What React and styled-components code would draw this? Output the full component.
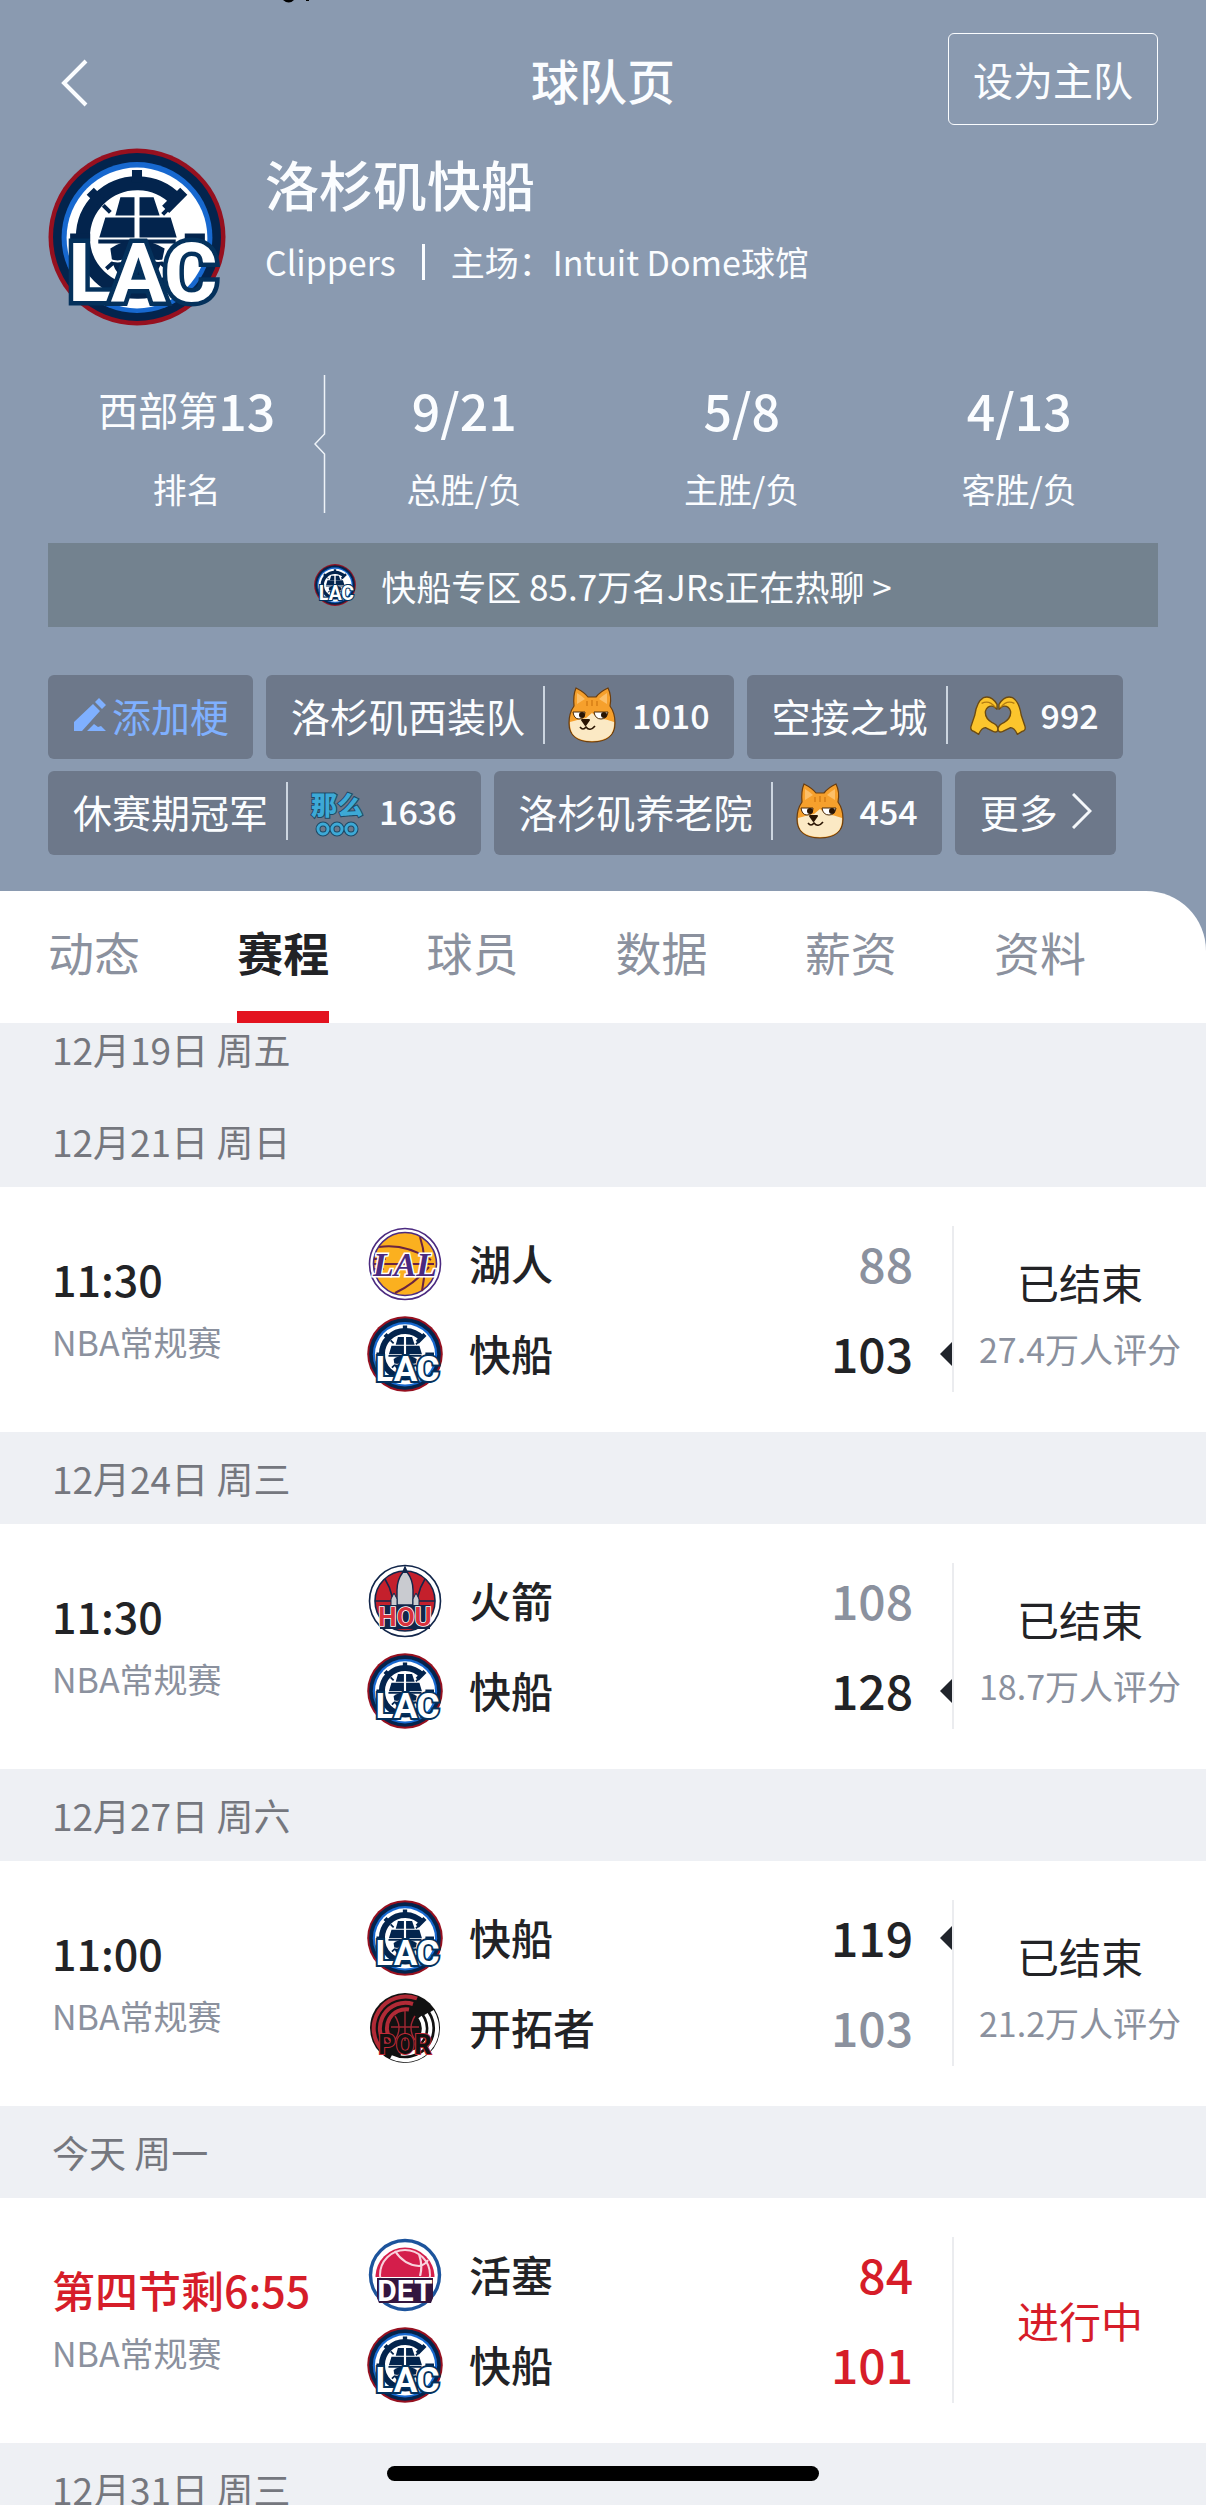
import React, { useState } from "react"

import { createGlobalStyle, styled } from "styled-components"

const GlobalStyle = createGlobalStyle`
    * {
        box-sizing: border-box;
    }

    body {
        margin: 0;

        font-family: "Noto Sans CJK SC", "Noto Sans", sans-serif;
        color: #222326;
    }

    button {
        border: none;

        background: none;

        padding: 0;

        font: inherit;
        color: inherit;

        cursor: pointer;
    }

    a {
        color: inherit;
        text-decoration: none;
    }

    h1, h2, h3, p {
        margin: 0;

        font-weight: 400;
    }

    svg {
        display: block;

        flex-shrink: 0;
    }
`

const StyledPage = styled.div`
    position: relative;

    height: 100vh;

    display: flex;
    flex-direction: column;

    overflow: hidden;

    background-color: #8a9ab0;
`

const StyledHeader = styled.header`
    padding: 33px 48px 36px;

    color: #fbfdff;
`

const StyledNotch = styled.svg`
    position: absolute;
    top: 0;
    left: 280px;
`

const StyledNavBar = styled.nav`
    height: 92px;

    display: grid;
    grid-template-columns: 1fr auto 1fr;
    align-items: center;

    h1 {
        font-size: 48px;
        font-weight: 500;
        line-height: 72px;
    }

    .back {
        justify-self: start;

        padding: 8px 12px 0;
    }

    .set-home {
        justify-self: end;

        height: 92px;

        border: 1px solid #fbfdff;
        border-radius: 6px;

        padding: 0 24px;

        font-size: 40px;
        line-height: 60px;
    }
`

const StyledTeam = styled.section`
    display: flex;
    gap: 39px;

    margin-top: 23px;

    h2 {
        font-size: 54px;
        font-weight: 500;
        line-height: 72px;
    }

    p {
        display: flex;
        align-items: center;
        gap: 26px;

        margin-top: 18px;

        font-size: 34px;
        line-height: 48px;
    }

    i {
        width: 3px;
        height: 36px;

        background-color: #fbfdff;
    }
`

const StyledStats = styled.section`
    display: flex;

    margin-top: 49px;

    > svg {
        margin: 0 0 0 -12px;
    }
`

const StyledStat = styled.div`
    flex: 1;

    display: flex;
    flex-direction: column;
    align-items: center;
    gap: 22px;

    strong {
        display: flex;
        align-items: center;

        font-size: 50px;
        font-weight: 500;
        line-height: 68px;
    }

    strong span {
        font-size: 40px;
        font-weight: 400;
    }

    p {
        font-size: 34px;
        line-height: 48px;
    }
`

const StyledChat = styled.a`
    height: 84px;

    display: flex;
    justify-content: center;
    align-items: center;
    gap: 25px;

    margin-top: 30px;

    background-color: #73828f;

    font-size: 35px;
`

const StyledTags = styled.section`
    display: flex;
    flex-wrap: wrap;
    gap: 12px 13px;

    margin-top: 48px;
`

const StyledTag = styled.button`
    height: 84px;

    display: flex;
    align-items: center;

    border-radius: 6px;

    background-color: #6d788a;

    padding: 0 24px 4px 25px;

    font-size: 39px;
    line-height: 56px;
    color: ${(props) => props.$accent ? "#7fb0ff" : "#fbfdff"};

    .pencil {
        margin-right: 5px;
    }

    .separator {
        width: 2px;
        height: 58px;

        margin: 0 22px 0 18px;

        background-color: #ccd5e0;
    }

    .count {
        margin-left: 15px;

        font-size: 34px;
        font-weight: 500;
    }

    .chevron {
        margin-left: 14px;
    }
`

const StyledTabs = styled.nav`
    position: relative;
    z-index: 1;

    flex-shrink: 0;

    display: flex;
    justify-content: space-between;

    border-top-right-radius: 60px;

    background-color: #fff;

    padding: 0 120px 0 48px;
`

const StyledTab = styled.button`
    height: 132px;

    border-bottom: 12px solid ${(props) => props.$active ? "#e3131f" : "transparent"};

    font-size: 46px;
    font-weight: ${(props) => props.$active ? 700 : 400};
    line-height: 120px;
    color: ${(props) => props.$active ? "#222326" : "#8b919e"};
`

const StyledSchedule = styled.main`
    flex: 1;

    overflow-y: auto;
    scrollbar-width: none;

    /* the list is scrolled a little under the tabs */
    margin-top: -20px;

    background-color: #eef0f4;
`

const StyledDate = styled.h3`
    height: 92px;

    padding-left: 52px;

    font-size: 37px;
    line-height: 92px;
    color: #75777e;
`

const StyledMatch = styled.a`
    display: grid;
    grid-template-columns: 315px 1fr 254px;

    background-color: #fff;

    padding: 39px 0 40px 52px;

    color: #222326;

    .when {
        display: flex;
        flex-direction: column;
        justify-content: center;
    }

    .teams {
        display: flex;
        flex-direction: column;
        gap: 14px;
    }

    .status {
        display: flex;
        flex-direction: column;
        justify-content: center;
        align-items: center;

        border-left: 2px solid #ebecef;
    }
`

const StyledTime = styled.p`
    font-size: 43px;
    font-weight: 500;
    line-height: 62px;
    color: ${(props) => props.$live ? "#d61d29" : "inherit"};
`

const StyledNote = styled.p`
    padding-top: 3px;

    font-size: 34px;
    line-height: 60px;
    color: #8b919e;
`

const StyledStatus = styled.p`
    margin-top: ${(props) => props.$live ? "0" : "8px"};

    font-size: 42px;
    line-height: 68px;
    color: ${(props) => props.$live ? "#d61d29" : "inherit"};
`

const StyledSide = styled.div`
    height: 76px;

    display: flex;
    align-items: center;

    .name {
        flex: 1;

        margin-left: 26px;
        padding-bottom: 4px;

        font-size: 42px;
        font-weight: 500;
    }

    .score {
        padding-bottom: 4px;

        font-size: 48px;
        font-weight: 500;
        color: ${(props) => props.$live ? "#d61d29" : props.$won ? "#222326" : "#8b919e"};
    }

    .arrow {
        width: 12px;
        height: 24px;

        margin-left: 27px;

        background-color: ${(props) => props.$won ? "#20242b" : "transparent"};

        clip-path: polygon(100% 0, 100% 100%, 0 50%);
    }
`

const StyledHomeBar = styled.div`
    position: absolute;
    bottom: 24px;
    left: 50%;

    width: 432px;
    height: 15px;

    border-radius: 8px;

    background-color: #000;

    transform: translateX(-50%);
`

const narrow = "'Liberation Sans Narrow', 'Roboto', sans-serif"

function ClippersLogo({ size }) {
    return (
        <svg width={size} height={size} viewBox="0 0 177 177" aria-hidden="true">
            <circle cx="88.5" cy="88.5" r="88" fill="#96101f" />
            <circle cx="88.5" cy="88.5" r="83.5" fill="#03244d" />
            <circle cx="88.5" cy="89" r="75" fill="#1768cf" />
            <circle cx="88.5" cy="89.5" r="70" fill="#fff" />
            <g fill="none" stroke="#03244d">
                <path d="M128 52A54 54 0 1 0 128 126" strokeWidth="14" />
                <path d="M88.5 22v12M42 43l10 10M135 43l-18 18" strokeWidth="10" />
                <path d="M55 57l7 7M114 66l8-8M58 120l8-7M119 120l-8-7" strokeWidth="4" />
            </g>
            <g fill="#03244d">
                <path d="M72 49h14v18H67zM91 49h14l6 18H91zM57 69h29v20H51zM91 69h31l6 20H91z" />
                <path d="M22 85h20v8H22zM136 85h20v8h-20zM50 91h77v4H50z" />
                <path d="M62 100q14-9 26-9t28 9l-3 14q-6 14-16 20H80q-12-8-16-20z" />
            </g>
            <path d="M61 111q10 4 17-1M100 110q8 4 17 1" fill="none" stroke="#fff" strokeWidth="2" />
            <path d="M88.5 44v46" stroke="#fff" strokeWidth="2" />
            <text y="152" textAnchor="middle" fontFamily={narrow} fontWeight="700" fontSize="82" fill="#fff" stroke="#04315c" strokeWidth="9" strokeLinejoin="miter" paintOrder="stroke">
                <tspan x="42">L</tspan>
                <tspan x="90">A</tspan>
                <tspan x="142">C</tspan>
            </text>
        </svg>
    )
}

function LakersLogo() {
    return (
        <svg width="76" height="76" viewBox="0 0 76 76" aria-hidden="true">
            <circle cx="38" cy="38" r="35.5" fill="#fff" stroke="#4b2a80" strokeWidth="1.6" />
            <circle cx="38" cy="38" r="31.5" fill="#fbb01f" stroke="#4b2a80" strokeWidth="1.6" />
            <path d="M12 21q26-4 52 13M53 11q8 24 2 54M7 38h60M7 33h12M7 43h10M28 67q18-8 34-26" fill="none" stroke="#6b2440" strokeWidth="2" />
            <text x="38" y="50" textAnchor="middle" fontFamily="'Liberation Serif', serif" fontStyle="italic" fontWeight="700" fontSize="34" fill="#4b2a80" stroke="#fff" strokeWidth="3" paintOrder="stroke">LAL</text>
        </svg>
    )
}

function RocketsLogo() {
    return (
        <svg width="76" height="76" viewBox="0 0 76 76" aria-hidden="true">
            <circle cx="38" cy="38" r="35.5" fill="#fff" stroke="#12264a" strokeWidth="1.6" />
            <circle cx="38" cy="38" r="30" fill="#c4202c" stroke="#12264a" strokeWidth="1.6" />
            <path d="M18 16q10 16 8 36M58 16q-10 16-8 36M8 38h60" fill="none" stroke="#12264a" strokeWidth="1.6" />
            <path d="M38 4l2 5q6 8 6 18v15H30V27q0-10 6-18z" fill="#c9cbd0" stroke="#12264a" strokeWidth="1.4" />
            <path d="M27 30l3 6v8h-6v-8zM49 30l3 6v8h-6v-8z" fill="#c9cbd0" stroke="#12264a" />
            <path d="M38 4l3 6h-6z" fill="#12264a" />
            <path d="M13 42h50v24H13z" fill="#12264a" />
            <text x="38" y="63" textAnchor="middle" fontFamily={narrow} fontWeight="700" fontSize="26" fill="#d8323d" stroke="#fff" strokeWidth="1.6" paintOrder="stroke">HOU</text>
        </svg>
    )
}

function BlazersLogo() {
    return (
        <svg width="76" height="76" viewBox="0 0 76 76" aria-hidden="true">
            <circle cx="38" cy="38" r="35" fill="#111" />
            <g fill="none" strokeWidth="4">
                <path d="M50 8.5A32 32 0 0 0 16 61M46 14A25.5 25.5 0 0 0 20 56M42 19.5A19 19 0 0 0 24 50" stroke="#b12a36" />
                <path d="M65 21A32 32 0 0 1 24 67M59 24A25.5 25.5 0 0 1 34 63.5M53 27A19 19 0 0 1 52 51" stroke="#fff" />
            </g>
            <path d="M38 21v30M24 37h28M28 26q8 12 0 24M48 26q-8 12 0 24" fill="none" stroke="#a02733" strokeWidth="1.4" />
            <text x="38" y="64" textAnchor="middle" fontFamily={narrow} fontWeight="700" fontSize="27" fill="#111" stroke="#c22a37" strokeWidth="2" paintOrder="stroke">POR</text>
        </svg>
    )
}

function PistonsLogo() {
    return (
        <svg width="76" height="76" viewBox="0 0 76 76" aria-hidden="true">
            <circle cx="38" cy="38" r="34.5" fill="#fff" stroke="#1d549c" strokeWidth="3.4" />
            <path d="M8.5 40a29.5 29.5 0 0 1 59 0z" fill="#d41e4b" />
            <circle cx="38" cy="38" r="25" fill="none" stroke="#f9d3dd" strokeWidth="2" />
            <path d="M28 14q9 14 24 15 6-1 9-6M52 17q4 12 1 22" fill="none" stroke="#f9d3dd" strokeWidth="2.2" />
            <path d="M14 60q22 12 48 0z" fill="#d41e4b" />
            <path d="M10 41h56v20l-2 5H12l-2-5z" fill="#33163f" />
            <text x="38" y="64" textAnchor="middle" fontFamily={narrow} fontWeight="700" fontSize="30" fill="#fff">DET</text>
        </svg>
    )
}

function Doge() {
    return (
        <svg width="50" height="56" viewBox="0 0 50 56" aria-hidden="true">
            <path d="M7 19Q6 8 9 1q8 4 12 9h8Q34 4 41 1q4 8 2 18 5 7 5 17c0 13-9 19-23 19S2 49 2 36Q2 26 7 19z" fill="#f6a02c" stroke="#6b3d0d" strokeWidth="1.2" />
            <path d="M3 35q10-3 16-4l6-5 6 5q8 1 16 4 1 19-22 19T3 35z" fill="#fbe9c4" />
            <path d="M10 6q5 3 8 6l-8 5zM40 6q-5 3-8 6l8 5z" fill="#fcbf68" />
            <path d="M20 14v5M25 13v6M30 14v5" stroke="#d47c15" strokeWidth="1.4" />
            <path d="M6 25h12q0 7-6 7-5 0-6-7zM27 25h14q-1 7-7 7t-7-7z" fill="#fff" stroke="#4a2a08" />
            <circle cx="15" cy="28" r="3" fill="#2a1503" />
            <circle cx="37" cy="28" r="3" fill="#2a1503" />
            <path d="M15 33h7l-3.5 5z" fill="#2a1503" stroke="#2a1503" strokeWidth="2" strokeLinejoin="round" />
            <path d="M13 40q3 4 6 0 4 5 9-1" fill="none" stroke="#2a1503" strokeWidth="1.6" />
        </svg>
    )
}

function HeartHands() {
    return (
        <svg width="56" height="42" viewBox="0 0 58 42" aria-hidden="true">
            <path d="M28 10Q22 0 14 3 7 7 5 21L1 33q-1 4 3 5l5 3q3-7 7-7l8 4q5 2 5-3-1-4-6-6-8-5-7-12 2-6 8-5l4 3z" fill="#fcc52d" stroke="#6b4a12" strokeWidth="1.4" strokeLinejoin="round" />
            <path d="M30 10Q36 0 44 3q7 4 9 18l4 12q1 4-3 5l-5 3q-3-7-7-7l-8 4q-5 2-5-3 1-4 6-6 8-5 7-12-2-6-8-5l-4 3z" fill="#fcc52d" stroke="#6b4a12" strokeWidth="1.4" strokeLinejoin="round" />
            <path d="M12 9q8-4 14 4M46 9q-8-4-14 4" fill="none" stroke="#b37c12" strokeWidth="1.4" />
        </svg>
    )
}

function NameSticker() {
    return (
        <svg width="54" height="56" viewBox="0 0 54 56" aria-hidden="true">
            <text x="27" y="32" textAnchor="middle" fontSize="26" fontWeight="900" fill="#3da9d6" stroke="#1e4a66" strokeWidth="2" paintOrder="stroke">那么</text>
            <g fill="none">
                <g stroke="#1e4a66" strokeWidth="5">
                    <circle cx="13" cy="46" r="5" /><circle cx="27" cy="46" r="5" /><circle cx="41" cy="46" r="5" />
                </g>
                <g stroke="#3da9d6" strokeWidth="3">
                    <circle cx="13" cy="46" r="5" /><circle cx="27" cy="46" r="5" /><circle cx="41" cy="46" r="5" />
                </g>
            </g>
        </svg>
    )
}

function Pencil() {
    return (
        <svg className="pencil" width="34" height="34" viewBox="0 0 34 34" fill="#7fb0ff" aria-hidden="true">
            <path d="M1 33v-9L20 6l7 7L9 33zM22 4l4-4 7 7-4 4zM14 33l7-7 4 3 3-1 5 5z" />
        </svg>
    )
}

function Chevron() {
    return (
        <svg className="chevron" width="20" height="36" viewBox="0 0 20 36" fill="none" stroke="#f4f7fa" strokeWidth="3" aria-hidden="true">
            <path d="M1 1l17 17L1 35" />
        </svg>
    )
}

const stats = [
    { value: "13", prefix: "西部第", label: "排名" },
    { value: "9/21", label: "总胜/负" },
    { value: "5/8", label: "主胜/负" },
    { value: "4/13", label: "客胜/负" },
]

const tags = [
    { name: "洛杉矶西装队", Icon: Doge, count: 1010 },
    { name: "空接之城", Icon: HeartHands, count: 992 },
    { name: "休赛期冠军", Icon: NameSticker, count: 1636 },
    { name: "洛杉矶养老院", Icon: Doge, count: 454 },
]

const tabs = ["动态", "赛程", "球员", "数据", "薪资", "资料"]

const logos = {
    "快船": ClippersLogo,
    "湖人": LakersLogo,
    "火箭": RocketsLogo,
    "开拓者": BlazersLogo,
    "活塞": PistonsLogo,
}

const schedule = [
    { date: "12月19日 周五" },
    { date: "12月21日 周日", match: { time: "11:30", status: "已结束", rating: "27.4万人评分", sides: [["湖人", 88], ["快船", 103]] } },
    { date: "12月24日 周三", match: { time: "11:30", status: "已结束", rating: "18.7万人评分", sides: [["火箭", 108], ["快船", 128]] } },
    { date: "12月27日 周六", match: { time: "11:00", status: "已结束", rating: "21.2万人评分", sides: [["快船", 119], ["开拓者", 103]] } },
    { date: "今天 周一", match: { time: "第四节剩6:55", status: "进行中", live: true, sides: [["活塞", 84], ["快船", 101]] } },
    { date: "12月31日 周三" },
]

function Match({ match }) {
    const best = Math.max(...match.sides.map(([, score]) => score))

    return (
        <StyledMatch href="#match">
            <div className="when">
                <StyledTime $live={match.live}>{match.time}</StyledTime>
                <StyledNote>NBA常规赛</StyledNote>
            </div>
            <div className="teams">
                {
                    match.sides.map(([name, score]) => {
                        const Logo = logos[name]

                        return (
                            <StyledSide key={name} $live={match.live} $won={!match.live && score === best}>
                                <Logo size={76} />
                                <span className="name">{name}</span>
                                <span className="score">{score}</span>
                                <span className="arrow"></span>
                            </StyledSide>
                        )
                    })
                }
            </div>
            <div className="status">
                <StyledStatus $live={match.live}>{match.status}</StyledStatus>
                {
                    match.rating ?
                        <StyledNote>{match.rating}</StyledNote>
                    :
                        <></>
                }
            </div>
        </StyledMatch>
    )
}

function App() {
    const [activeTab, setActiveTab] = useState("赛程")

    return (
        <>
            <GlobalStyle />
            <StyledPage>
                <StyledHeader>
                    <StyledNotch width="34" height="3" viewBox="0 0 34 3" aria-hidden="true">
                        <path d="M3 0h11q-5 5-11 0zM26 0h3v1h-3z" />
                    </StyledNotch>
                    <StyledNavBar>
                        <button className="back" aria-label="返回">
                            <svg width="28" height="48" viewBox="0 0 28 48" fill="none" stroke="#fbfdff" strokeWidth="4">
                                <path d="M26 2L4 24l22 22" />
                            </svg>
                        </button>
                        <h1>球队页</h1>
                        <button className="set-home">设为主队</button>
                    </StyledNavBar>
                    <StyledTeam>
                        <ClippersLogo size={178} />
                        <div>
                            <h2>洛杉矶快船</h2>
                            <p><span>Clippers</span><i></i><span>主场：Intuit Dome球馆</span></p>
                        </div>
                    </StyledTeam>
                    <StyledStats>
                        {
                            stats.map((stat, index) => (
                                <React.Fragment key={stat.label}>
                                    <StyledStat>
                                        <strong><span>{stat.prefix}</span>{stat.value}</strong>
                                        <p>{stat.label}</p>
                                    </StyledStat>
                                    {
                                        index === 0 ?
                                            <svg width="12" height="138" viewBox="0 0 12 138" fill="none" stroke="#eef3f8" strokeWidth="1.5" aria-hidden="true">
                                                <path d="M10.5 0v59L1 69l9.5 10v59" />
                                            </svg>
                                        :
                                            <></>
                                    }
                                </React.Fragment>
                            ))
                        }
                    </StyledStats>
                    <StyledChat href="#chat">
                        <ClippersLogo size={42} />
                        <span>快船专区 85.7万名JRs正在热聊 &gt;</span>
                    </StyledChat>
                    <StyledTags>
                        <StyledTag $accent><Pencil /><span>添加梗</span></StyledTag>
                        {
                            tags.map(({ name, Icon, count }) => (
                                <StyledTag key={name}>
                                    <span>{name}</span>
                                    <span className="separator"></span>
                                    <Icon />
                                    <span className="count">{count}</span>
                                </StyledTag>
                            ))
                        }
                        <StyledTag><span>更多</span><Chevron /></StyledTag>
                    </StyledTags>
                </StyledHeader>
                <StyledTabs>
                    {
                        tabs.map((tab) => (
                            <StyledTab key={tab} $active={tab === activeTab} onClick={() => setActiveTab(tab)}>{tab}</StyledTab>
                        ))
                    }
                </StyledTabs>
                <StyledSchedule>
                    {
                        schedule.map(({ date, match }) => (
                            <section key={date}>
                                <StyledDate>{date}</StyledDate>
                                {match ? <Match match={match} /> : <></>}
                            </section>
                        ))
                    }
                </StyledSchedule>
                <StyledHomeBar />
            </StyledPage>
        </>
    )
}

export default App
